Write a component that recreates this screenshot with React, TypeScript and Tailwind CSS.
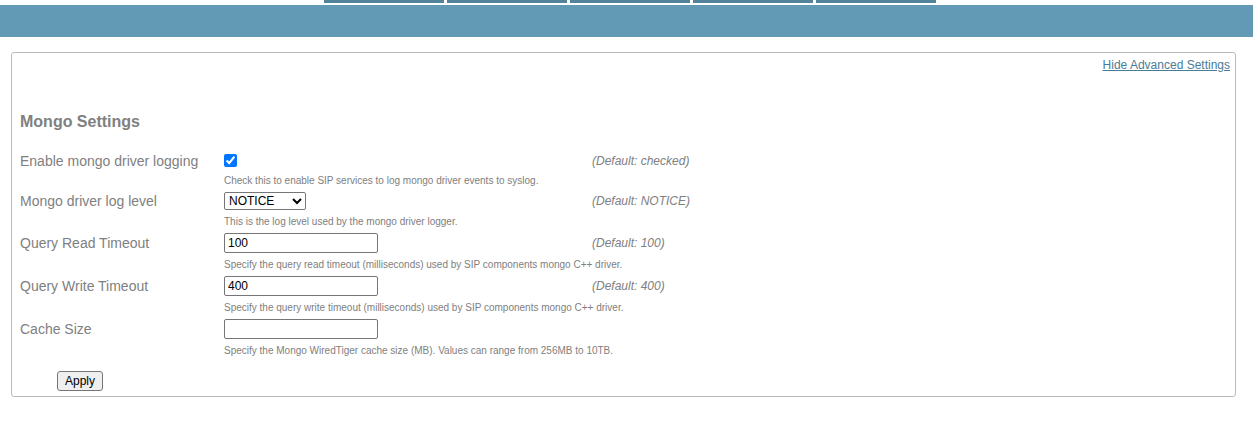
import type { ReactNode } from "react";

const tabs = ["tab-1", "tab-2", "tab-3", "tab-4", "tab-5"];

const inputClass =
  "block h-5 w-[154px] rounded-xs border border-[#767676] bg-white px-[3px] text-xs text-black";

type SettingProps = {
  id: string;
  label: string;
  hint: string;
  fallback?: string;
  children: ReactNode;
};

function Setting({ id, label, hint, fallback, children }: SettingProps) {
  return (
    <div className="grid grid-cols-[204px_368px_1fr] items-center">
      <label htmlFor={id} className="text-sm leading-4">
        {label}
      </label>
      {children}
      <p className="text-xs leading-4 italic">{fallback}</p>
      <p className="col-span-2 col-start-2 text-[10px] leading-[23px]">{hint}</p>
    </div>
  );
}

export default function App() {
  return (
    <div className="bg-white font-['Liberation_Sans',Arial,sans-serif] text-[#808080]">
      <nav className="ml-[324px] flex gap-[3px] pb-0.5">
        {tabs.map((tab) => (
          <span key={tab} className="h-[3px] w-[120px] bg-[#53829b]" />
        ))}
      </nav>
      <div className="h-8 bg-[#6299b5]" />
      <main className="mt-[15px] mr-[17px] ml-[11px] rounded-[3px] border border-[#bbb] px-2 pb-[5px]">
        <div className="-mr-[3px] pt-1 text-right text-xs leading-4">
          <a href="#" className="text-[#4a7c97] underline">
            Hide Advanced Settings
          </a>
        </div>
        <h1 className="mt-10 mb-[21px] text-base leading-[18px] font-bold">Mongo Settings</h1>
        <form onSubmit={(e) => e.preventDefault()}>
          <Setting
            id="logging"
            label="Enable mongo driver logging"
            hint="Check this to enable SIP services to log mongo driver events to syslog."
            fallback="(Default: checked)"
          >
            <div className="flex h-[17px] items-center">
              <input id="logging" type="checkbox" defaultChecked className="size-[13px]" />
            </div>
          </Setting>
          <Setting
            id="level"
            label="Mongo driver log level"
            hint="This is the log level used by the mongo driver logger."
            fallback="(Default: NOTICE)"
          >
            <select
              id="level"
              defaultValue="NOTICE"
              className="block h-[18px] w-[82px] rounded-xs border border-[#767676] bg-white text-xs leading-4 text-black"
            >
              <option>DEBUG</option>
              <option>INFO</option>
              <option>NOTICE</option>
              <option>WARNING</option>
            </select>
          </Setting>
          <Setting
            id="read"
            label="Query Read Timeout"
            hint="Specify the query read timeout (milliseconds) used by SIP components mongo C++ driver."
            fallback="(Default: 100)"
          >
            <input id="read" type="text" defaultValue="100" className={inputClass} />
          </Setting>
          <Setting
            id="write"
            label="Query Write Timeout"
            hint="Specify the query write timeout (milliseconds) used by SIP components mongo C++ driver."
            fallback="(Default: 400)"
          >
            <input id="write" type="text" defaultValue="400" className={inputClass} />
          </Setting>
          <Setting
            id="cache"
            label="Cache Size"
            hint="Specify the Mongo WiredTiger cache size (MB). Values can range from 256MB to 10TB."
          >
            <input id="cache" type="text" className={inputClass} />
          </Setting>
          <button
            type="submit"
            className="mt-[9px] ml-[37px] block h-5 w-[46px] rounded-[3px] border border-[#767676] bg-[#efefef] text-xs text-black"
          >
            Apply
          </button>
        </form>
      </main>
    </div>
  );
}
